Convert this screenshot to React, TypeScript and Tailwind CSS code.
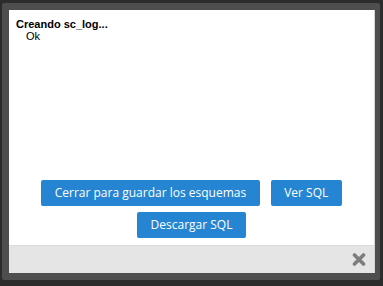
export default function App() {
  const buttons = ['Cerrar para guardar los esquemas', 'Ver SQL', 'Descargar SQL'];

  return (
    <div className="h-[286px] w-[383px] overflow-hidden bg-[#2c2c2c] pt-[3px] pl-[2px] pr-[3px]">
      <div className="h-[277px] rounded-[2px] bg-[#4e4e4e] pt-[7px] pl-[7px] pr-[5px] pb-[7px]">
        <div className="flex h-[263px] flex-col border-r border-[#d6d6d6]">
          <div className="flex flex-1 flex-col bg-white">
            <div className="px-[7px] pt-[8px] font-['Liberation_Sans',Arial,sans-serif] text-[11px] leading-[12px] text-black">
              <div className="font-bold">Creando sc_log...</div>
              <div className="pl-[10px]">Ok</div>
            </div>
            <div className="mt-auto flex flex-wrap justify-center gap-x-[11px] gap-y-[6px] px-[8px] pb-[7px]">
              {buttons.map((b) => (
                <button
                  key={b}
                  className="h-[26px] rounded-[2px] bg-[#2585d2] px-[13.5px] font-['Open_Sans',sans-serif] text-[12px] text-white"
                >
                  {b}
                </button>
              ))}
            </div>
          </div>
          <div className="flex h-[28px] items-center justify-end border-t border-[#dcdcdc] bg-[#e5e5e5] pr-[8px]">
            <svg width="14" height="15" viewBox="0 0 14 15">
              <path d="M2.5 3 L11.5 12 M11.5 3 L2.5 12" stroke="#7d7d7d" strokeWidth="3.6" strokeLinecap="round" />
            </svg>
          </div>
        </div>
      </div>
    </div>
  );
}
